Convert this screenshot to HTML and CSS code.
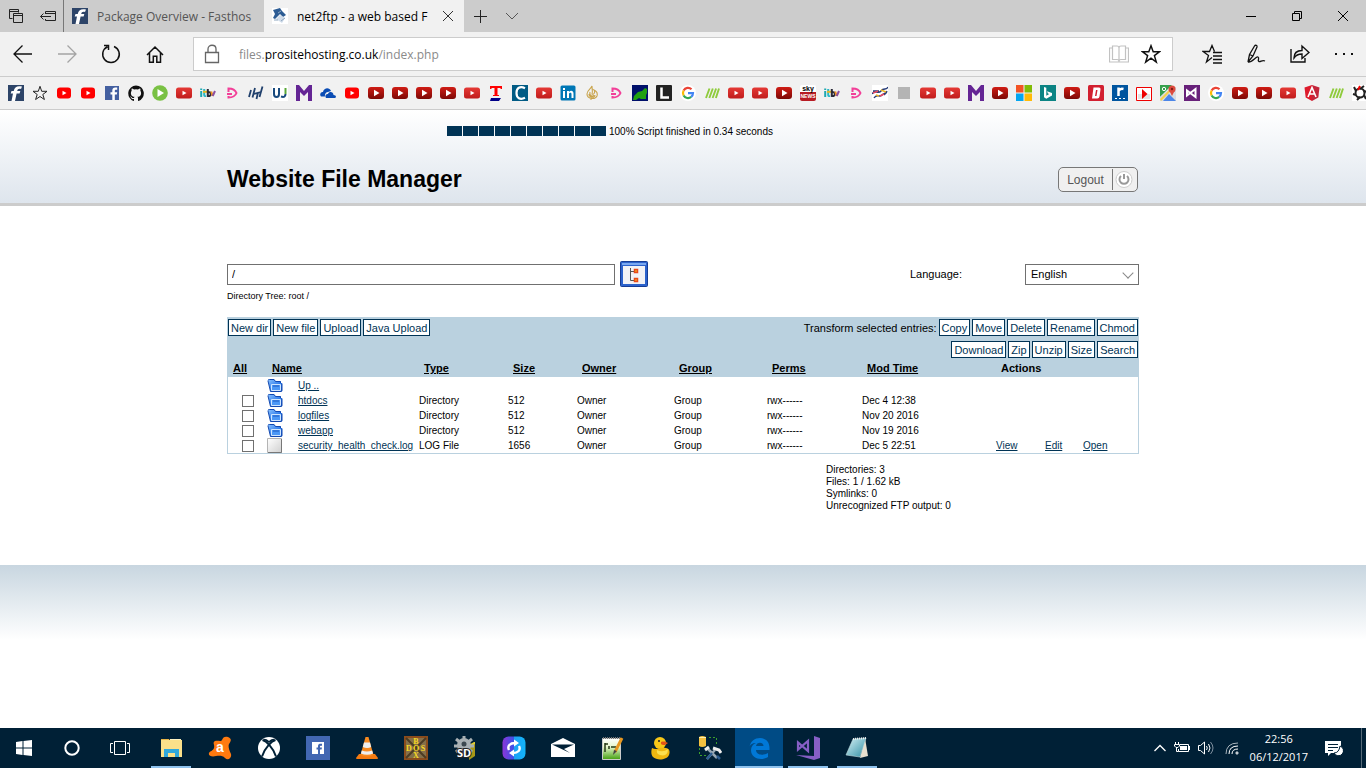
FILE: index.html
```html
<!DOCTYPE html>
<html lang="en">
<head>
<meta charset="utf-8">
<title>net2ftp - a web based FTP client</title>
<link rel="stylesheet" href="styles.css">
</head>
<body>
<svg class="defs" width="0" height="0" aria-hidden="true">
  <defs>
    <linearGradient id="g-dark" x1="0" y1="0" x2="0" y2="1"><stop offset="0" stop-color="#d01c14"/><stop offset="1" stop-color="#7c0906"/></linearGradient>
    <linearGradient id="g-mid" x1="0" y1="0" x2="0" y2="1"><stop offset="0" stop-color="#e53935"/><stop offset="1" stop-color="#c01c1c"/></linearGradient>
    <linearGradient id="g-folder" x1="0" y1="0" x2="1" y2="1"><stop offset="0" stop-color="#8cc4ff"/><stop offset=".6" stop-color="#2f7ceb"/><stop offset="1" stop-color="#0c47b4"/></linearGradient>
    <linearGradient id="g-page" x1="0" y1="0" x2="1" y2="1"><stop offset="0" stop-color="#fff"/><stop offset="1" stop-color="#d0d0d0"/></linearGradient>
    <linearGradient id="g-sync" x1="0" y1="0" x2="1" y2="0"><stop offset="0" stop-color="#8a35d8"/><stop offset=".5" stop-color="#3b53e8"/><stop offset=".5" stop-color="#1fa0f5"/><stop offset="1" stop-color="#12b5fa"/></linearGradient>
    <linearGradient id="g-note" x1="0" y1="0" x2="1" y2="1"><stop offset="0" stop-color="#d8f3f7"/><stop offset="1" stop-color="#2f8ea4"/></linearGradient>
    <linearGradient id="g-npp" x1="0" y1="0" x2="0" y2="1"><stop offset="0" stop-color="#fff"/><stop offset=".4" stop-color="#e6f6cc"/><stop offset="1" stop-color="#43a010"/></linearGradient>
    <symbol id="fast" viewBox="0 0 16 16"><path fill="#2d4468" d="M0 0h16v16H0z"/><path fill="#fff" d="M14 1.500c-5-1-7.500.5-8.300 4.500H3.500L2.700 8.500h2.300L3.500 16H7l1.600-7.500h3l.7-2.500H9.200c.4-2 1.500-2.500 3.800-2z"/></symbol>
    <symbol id="star" viewBox="0 0 16 16"><path fill="none" stroke="#222" d="M8 1.300l1.700 5H15l-4.200 3.200 1.600 5L8 11.500l-4.400 3 1.600-5L1 6.300h5.300z"/></symbol>
    <symbol id="yt" viewBox="0 0 16 16"><rect x="1" y="2.500" width="14" height="11" rx="3" fill="#f00"/><path fill="#fff" d="M6.500 5.700l4 2.300-4 2.300z"/></symbol>
    <symbol id="ytm" viewBox="0 0 16 16"><rect y="2.500" width="16" height="11" rx="2.500" fill="url(#g-mid)"/><path fill="#fff" d="M6.500 5.700l4 2.300-4 2.300z"/></symbol>
    <symbol id="ytd" viewBox="0 0 16 16"><rect y="2" width="16" height="12" rx="3" fill="url(#g-dark)"/><path fill="#fff" d="M6 4.700L11.500 8 6 11.300z"/></symbol>
    <symbol id="fb" viewBox="0 0 16 16"><path fill="#4460a0" d="M1 1h14v14H1z"/><path fill="#fff" d="M8.300 15V9.500H6.500V7.200h1.800V5.500c0-2 1.200-3 3-3h1.900v2.300h-1.300c-.9 0-1.100.4-1.100 1.100v1.300h2.400l-.4 2.300h-2V15z"/></symbol>
    <symbol id="gh" viewBox="0 0 16 16"><path fill="#111" d="M8 .4a8 8 0 0 0-2.500 15.500c.4.100.5-.2.500-.4v-1.500c-2.200.5-2.700-1-2.700-1-.4-.9-.9-1.100-.9-1.100-.7-.5.100-.5.100-.5.800 0 1.200.8 1.200.8.700 1.200 1.900.9 2.300.7.100-.5.300-.9.500-1.100-1.800-.2-3.600-.9-3.600-3.900 0-.9.300-1.600.8-2.100-.1-.3-.4-1.100.1-2.200 0 0 .7-.2 2.200.8a7.600 7.600 0 0 1 4 0c1.500-1 2.200-.8 2.200-.8.400 1.100.2 1.900.1 2.200.5.600.8 1.300.8 2.100 0 3.100-1.900 3.700-3.700 3.900.3.300.6.800.6 1.500v2.200c0 .2.100.5.600.4A8 8 0 0 0 8 .4z"/></symbol>
    <symbol id="gplay" viewBox="0 0 16 16"><circle cx="8" cy="8" r="7.800" fill="#79c143"/><path fill="#fff" d="M5.500 4l6.500 4-6.500 4z"/></symbol>
    <symbol id="itv" viewBox="0 0 16 16" fill="none" stroke-width="2"><path stroke="#20a8b0" d="M1.200 6v6M1.200 3.500v1.500"/><path stroke="#28b8c8" d="M4.200 4v6q0 1.500 1.800 1"/><path stroke="#e8b820" d="M3 6.800h4"/><path stroke="#2a2a38" d="M7.800 4v7q3 .5 3-2t-3-1.500"/><path stroke="#f09020" d="M11.200 6.500l1.500 4.500"/><path stroke="#8c50a0" d="M12.700 11l2.300-5"/></symbol>
    <symbol id="pd" viewBox="0 0 16 16"><path fill="none" stroke="#f23f98" stroke-width="2" d="M4.500 7V3.500C9 3.500 11.500 5.500 12.500 8c-1 2.500-3.500 4.500-8 4.500V11M3 9h5"/></symbol>
    <symbol id="ih" viewBox="0 0 16 16"><path fill="none" stroke="#20406c" stroke-width="1.800" d="M3 5L1 12M7 3L4.500 12.500M10 7.500L8.500 14M14.500 1.500L11.500 12M6 9l7-2"/></symbol>
    <symbol id="uj" viewBox="0 0 16 16"><path fill="#fff" d="M0 0h16v16H0z"/><path fill="none" stroke="#194a7e" stroke-width="2" d="M2 3v6c0 4 5 4 5 0V3M9 11.500c3 1 4.500 0 4.500-2.500"/><path stroke="#5aa838" stroke-width="2" d="M13.500 3v6"/></symbol>
    <symbol id="mm" viewBox="0 0 16 16"><path fill="#642594" d="M0 0h3l5 6 5-6h3v16h-4V7l-4 4-4-4v9H0z"/></symbol>
    <symbol id="od" viewBox="0 0 16 16"><path fill="#0a4cb4" d="M1 11.500c-2-2 0-5 2-4.500C4 2.500 9.500 2 11 6l-3 1c-2 0-3.500 2-3 4.500z"/><path fill="#0a4cb4" d="M6 13c-1.500-2 0-4.500 2-4 1-3 5.500-2.500 5.500 1 3 0 3.200 3 1 3z"/></symbol>
    <symbol id="tt" viewBox="0 0 16 16"><path fill="#f00" d="M2 1h12v3h-1l-1-1H9.500v7H11v1H5v-1h1.500V3H4L3 4H2z"/><path fill="#008" d="M3 13h10l-2 3H2z"/></symbol>
    <symbol id="cc" viewBox="0 0 16 16"><path fill="#015b84" d="M0 0h16v16H0z"/><path fill="none" stroke="#fff" stroke-width="2.200" d="M13 3.200C8 .8 4.500 3 4.500 8s3.500 7.200 8.500 4.800"/></symbol>
    <symbol id="li" viewBox="0 0 16 16"><rect x=".5" y=".5" width="15" height="15" rx="1.500" fill="#0077b5"/><path fill="#fff" d="M3 6h2v7H3zM3 3h2v2H3zM7 6h2v1c1.500-2 4.500-1.500 4.500 1.500V13h-2V9c0-2-2.500-1.500-2.500 0v4H7z"/></symbol>
    <symbol id="aj" viewBox="0 0 16 16"><path fill="none" stroke="#c9a44c" stroke-width="1.100" d="M8 1c-1 3-5 4-5 8 0 5 8 6 10 2 1-3-1-5-3-6 2 3-1 5-2 4 1-2 0-4 0-8zM5 9c0 4 6 4 6 1M6 7c-1 4 3 5 4 3M7 13v2"/></symbol>
    <symbol id="navy" viewBox="0 0 16 16"><path fill="#00106a" d="M0 0h16v16H0z"/><path fill="#20a010" d="M2 11l4-4 4-1 3-3 2 1v4l-1 2v4H9l-2-1-3 2H1z"/></symbol>
    <symbol id="ll" viewBox="0 0 16 16"><rect width="16" height="16" rx="1" fill="#222"/><path fill="none" stroke="#fff" stroke-width="2.500" d="M5.500 2.500v10H13"/></symbol>
    <symbol id="goo" viewBox="0 0 16 16"><circle cx="8" cy="8" r="8" fill="#fff"/><g fill="none" stroke-width="2.200"><path stroke="#ea4335" d="M3.600 5.500A5 5 0 0 1 11.500 4.300"/><path stroke="#fbbc05" d="M3.600 5.500a5.400 5.400 0 0 0 0 5"/><path stroke="#34a853" d="M3.600 10.500a5 5 0 0 0 7.600 1.400"/><path stroke="#4285f4" d="M11.200 11.900c1.300-1 1.800-2.400 1.800-3.800H8"/></g></symbol>
    <symbol id="strp" viewBox="0 0 16 16"><path stroke="#8fcb3c" stroke-width="1.900" d="M2 13L5.500 3.500M5.300 13l3.500-9.500M8.600 13l3.500-9.500M11.900 13l3.100-9.500"/></symbol>
    <symbol id="sky" viewBox="0 0 16 16"><rect width="16" height="16" rx="2" fill="#fff"/><path fill="#b81c24" d="M0 7h16v7q0 2-2 2H2q-2 0-2-2z"/><text x="8" y="6" text-anchor="middle" font-family="Liberation Sans, sans-serif" font-weight="700" font-size="7">sky</text><text x="8" y="13" text-anchor="middle" font-family="Liberation Sans, sans-serif" font-weight="700" font-size="5" fill="#fff">NEWS</text></symbol>
    <symbol id="oly" viewBox="0 0 16 16"><path fill="#fff" d="M0 0h16v16H0z"/><path fill="none" stroke="#263c78" stroke-width="1.400" d="M0 9c3-5 6 1 9-3s5 0 7-4M2 13c3-5 5 0 8-3s4-1 5-4M1 6h6M12 10l3-3"/><path stroke="#e84860" stroke-width="1.400" d="M1 8l5-2M8 11l4-2"/><path stroke="#e8b020" stroke-width="1.400" d="M9 5l5 2M4 10l3 1"/></symbol>
    <symbol id="gry" viewBox="0 0 16 16"><path fill="#b4b4b4" d="M2 2h12v12H2z"/></symbol>
    <symbol id="ms" viewBox="0 0 16 16"><path fill="#f35325" d="M0 0h7.500v7.500H0z"/><path fill="#81bc06" d="M8.500 0H16v7.500H8.500z"/><path fill="#05a6f0" d="M0 8.500h7.500V16H0z"/><path fill="#ffba08" d="M8.500 8.500H16V16H8.500z"/></symbol>
    <symbol id="bing" viewBox="0 0 16 16"><path fill="#0c8484" d="M0 0h16v16H0z"/><path fill="#fff" d="M4 2l2.300.8v8l3-1.700-1.400-.7-.9-2.200 5 1.800v2.400l-5.700 3.300L4 12.200z"/></symbol>
    <symbol id="rd" viewBox="0 0 16 16"><rect width="16" height="16" rx="1.500" fill="#d22030"/><path fill="#fff" fill-rule="evenodd" d="M5.500 2.500H11q1.800 0 1.500 2l-1 7q-.3 2-2.200 2H4zM8 5l-1 6h1.500l1-6z"/></symbol>
    <symbol id="rr" viewBox="0 0 16 16"><path fill="#00559f" d="M0 0h16v16H0z"/><path fill="none" stroke="#fff" stroke-width="2.500" d="M6.500 11V2.500M6.500 6c1-2 3-2.500 5-2"/><path fill="#fff" d="M3 13h2v1H3zM7 13h2v1H7zM11 13h2v1h-2z"/></symbol>
    <symbol id="rbox" viewBox="0 0 16 16"><path fill="#fff" stroke="#e00" d="M.5 2.500h15v13H.5z"/><path fill="#e4e4e4" d="M2 9h12v5H2z"/><path fill="#e00" d="M6 4l5.500 5L6 14z"/></symbol>
    <symbol id="maps" viewBox="0 0 16 16"><path fill="#36a04c" d="M0 0h12L0 12z"/><path fill="#d9dce0" d="M0 16V12L12 2h4v14z"/><path fill="#f5cf4a" d="M0 14L13 1l2 1L1 16z"/><path fill="#4c86e8" d="M3 16l6-7 7 7z"/><circle cx="12" cy="4" r="3.500" fill="#dd4b3e"/><path fill="#dd4b3e" d="M9 5h6l-3 6z"/><circle cx="12" cy="4" r="1.200" fill="#801c14"/><circle cx="4" cy="4" r="1.700" fill="none" stroke="#fff"/></symbol>
    <symbol id="vs" viewBox="0 0 16 16"><path fill="#68217a" d="M0 0h16v16H0z"/><path fill="none" stroke="#fff" stroke-width="2" d="M3 5.500v5l8.500-6.500v8z"/></symbol>
    <symbol id="ang" viewBox="0 0 16 16"><path fill="#c3253a" d="M8 0v16l6.300-3.600 1.200-9.800z"/><path fill="#dd1b2c" d="M8 0L.5 2.600l1.200 9.800L8 16z"/><path fill="none" stroke="#fff" stroke-width="1.600" d="M4 12l4-9.500 4 9.500M5.500 9h5"/></symbol>
    <symbol id="aper" viewBox="0 0 16 16"><path fill="#fff" d="M0 0h16v16H0z"/><circle cx="8" cy="8" r="4.500" fill="none" stroke="#222" stroke-width="2"/><path stroke="#222" stroke-width="2" d="M8 4l4-3M11.500 6l4 1M12 10l2 4M8 12l-3 3M4 10l-3-1M4 6L2 2"/><path stroke="#e00" stroke-width="2" d="M6 5l2-4"/></symbol>
    <symbol id="folder" viewBox="0 0 16 15"><path fill="url(#g-folder)" d="M1 2.500Q1 1 2.500 1H7l1.500 2H13q1 0 1 1v1h1v7.500q0 1-1 1H3.500z"/><path fill="none" stroke="#1248b0" d="M1 2.500Q1 1.500 2.500 1.500H7l1.500 2h5v1.500M15 5.500v7q0 1-1 1H3.500L1 3"/><path fill="#4c98f6" stroke="#cfe6ff" d="M4.500 6.500h9v6h-9z"/><path stroke="#1c58c0" d="M6 8h6"/></symbol>
    <symbol id="file" viewBox="0 0 16 15"><path fill="url(#g-page)" stroke="#b4b4b4" d="M.5.500h14v14H.5z"/><path fill="none" stroke="#777" d="M14.500 1v13.500H1"/></symbol>
  </defs>
</svg>

<header class="browser">
  <div class="tabstrip">
    <div class="tabtools">
      <button aria-label="Tabs you have set aside"><svg width="16" height="16" viewBox="0 0 16 16" fill="none" stroke="#222"><path d="M4.500 10.500h-3v-9h9v3M1.500 3.500h9M5.500 5.500h9v9h-9zM5.500 7.500h9"/></svg></button>
      <button aria-label="Set tabs aside"><svg width="16" height="16" viewBox="0 0 16 16" fill="none" stroke="#222"><path d="M5.500 6V3.500h10v9h-10V11M5.500 5.500h10M.5 8.500H11M3.500 5.500l-3 3 3 3"/></svg></button>
    </div>
    <a class="tab" href="#"><svg class="i16"><use href="#fast"/></svg><span>Package Overview - Fasthos</span></a>
    <div class="tab tab-active"><svg class="i16" viewBox="0 0 16 16"><path fill="#fff" d="M0 0h16v16H0z"/><path fill="#2c5c94" d="M1 2l7-2 2 3 4 4-3 2-3-3-5 5-2-1 2-4z"/><path fill="#d0dcea" d="M4 11l4-4 5 3-3 5z"/><path stroke="#90a8c0" d="M2 12h4M6 5l3-2M9 13l4-3"/></svg><span>net2ftp - a web based F</span><button class="closetab" aria-label="Close tab"><svg width="12" height="12" viewBox="0 0 12 12" stroke="#333"><path d="M1 1l10 10M11 1L1 11"/></svg></button></div>
    <button class="striptool" aria-label="New tab"><svg width="14" height="14" viewBox="0 0 14 14" stroke="#222"><path d="M7.500 1v13M1 7.500h13"/></svg></button>
    <button class="striptool" aria-label="Tab previews"><svg width="14" height="14" viewBox="0 0 14 14" fill="none" stroke="#555"><path d="M1 4l6 6 6-6"/></svg></button>
    <div class="winbuttons">
      <button aria-label="Minimize"><svg width="10" height="10" stroke="#000"><path d="M0 5.500h10"/></svg></button>
      <button aria-label="Restore"><svg width="10" height="10" fill="none" stroke="#000"><path d="M.5 2.500h7v7h-7zM2.500 2.500v-2h7v7h-2"/></svg></button>
      <button aria-label="Close"><svg width="10" height="10" stroke="#000"><path d="M0 0l10 10M10 0L0 10"/></svg></button>
    </div>
  </div>
  <div class="toolbar">
    <nav class="navbuttons">
      <button aria-label="Back"><svg width="20" height="20" viewBox="0 0 20 20" fill="none" stroke="#111" stroke-width="1.300"><path d="M1 10h18M9.500 1.500L1 10l8.500 8.500"/></svg></button>
      <button aria-label="Forward"><svg width="20" height="20" viewBox="0 0 20 20" fill="none" stroke="#a4a4a4" stroke-width="1.300"><path d="M1 10h18M10.500 1.500L19 10l-8.500 8.500"/></svg></button>
      <button aria-label="Refresh"><svg width="20" height="20" viewBox="0 0 20 20" fill="none" stroke="#111" stroke-width="1.500"><path d="M13 2.500a8.300 8.300 0 1 1-6.500.2M3 1.500h4.500V6"/></svg></button>
      <button aria-label="Home"><svg width="20" height="20" viewBox="0 0 20 20" fill="none" stroke="#111" stroke-width="1.500"><path d="M2 11l8-8 8 8M4.500 9v9.200h3.800v-6h3.500v6h3.700V9"/></svg></button>
    </nav>
    <div class="address">
      <svg width="16" height="20" viewBox="0 0 16 20" fill="none" stroke="#666" stroke-width="1.300"><path d="M1.500 8.500h13v10h-13zM4 8.500V5c0-5 8-5 8 0v3.500"/></svg>
      <p class="url">files.<b>prositehosting.co.uk</b>/index.php</p>
      <button aria-label="Reading view"><svg width="20" height="20" viewBox="0 0 20 20" fill="none" stroke="#c2c2c2" stroke-width="1.200"><path d="M10 3.500v14M3.500 2H8q2 0 2 2 0-2 2-2h4.500v13.500H12q-2 0-2 2 0-2-2-2H3.500zM3.500 4h-3v14h19V4h-3"/></svg></button>
      <button aria-label="Add to favourites"><svg width="20" height="20" viewBox="0 0 20 20" fill="none" stroke="#111" stroke-width="1.500"><path d="M10 1.800l2.200 6h6.200l-5 3.800 1.900 6.400-5.300-3.800L4.700 18l1.900-6.400-5-3.800h6.200z"/></svg></button>
    </div>
    <div class="toolbuttons">
      <button aria-label="Hub"><svg width="20" height="20" viewBox="0 0 20 20" fill="none" stroke="#111" stroke-width="1.300"><path d="M10 13.500L4.500 18l2-6.500-5.500-4h6.500l2.500-6 2.500 6M11 8.500h9M11 12h9M11 15.500h9M11 19h9"/></svg></button>
      <button aria-label="Make a web note"><svg width="20" height="20" viewBox="0 0 20 20" fill="none" stroke="#111" stroke-width="1.300"><path d="M2 18L3.500 10.500 8.500 2c1-1.500 3-.5 2.500 1L7 12l-5 6zM3.500 10.500L7 12M2 18c4 1 8-6 10-5s-1 4 1 4.500 3-2 6-.5"/></svg></button>
      <button aria-label="Share"><svg width="20" height="20" viewBox="0 0 20 20" fill="none" stroke="#111" stroke-width="1.400"><path d="M1 5v13h14v-4M4 14c0-5 3-7.500 8-7.500V2l7 6.500-7 6v-4.500c-4 0-6 1-8 4z"/></svg></button>
      <button aria-label="More"><svg width="20" height="20" viewBox="0 0 20 20" fill="#111"><path d="M1 9h2v2H1zM9 9h2v2H9zM17 9h2v2h-2z"/></svg></button>
    </div>
  </div>
  <nav class="favourites" aria-label="Favourites">
    <svg><use href="#fast"/></svg><svg><use href="#star"/></svg><svg><use href="#yt"/></svg><svg><use href="#yt"/></svg><svg><use href="#fb"/></svg><svg><use href="#gh"/></svg><svg><use href="#gplay"/></svg><svg><use href="#ytm"/></svg><svg><use href="#itv"/></svg><svg><use href="#pd"/></svg>
    <svg><use href="#ih"/></svg><svg><use href="#uj"/></svg><svg><use href="#mm"/></svg><svg><use href="#od"/></svg><svg><use href="#yt"/></svg><svg><use href="#ytd"/></svg><svg><use href="#ytd"/></svg><svg><use href="#ytd"/></svg><svg><use href="#ytd"/></svg><svg><use href="#ytm"/></svg>
    <svg><use href="#tt"/></svg><svg><use href="#cc"/></svg><svg><use href="#ytm"/></svg><svg><use href="#li"/></svg><svg><use href="#aj"/></svg><svg><use href="#pd"/></svg><svg><use href="#navy"/></svg><svg><use href="#ll"/></svg><svg><use href="#goo"/></svg><svg><use href="#strp"/></svg>
    <svg><use href="#ytm"/></svg><svg><use href="#ytm"/></svg><svg><use href="#ytd"/></svg><svg><use href="#sky"/></svg><svg><use href="#itv"/></svg><svg><use href="#pd"/></svg><svg><use href="#oly"/></svg><svg><use href="#gry"/></svg><svg><use href="#ytm"/></svg><svg><use href="#ytm"/></svg>
    <svg><use href="#mm"/></svg><svg><use href="#ytd"/></svg><svg><use href="#ms"/></svg><svg><use href="#bing"/></svg><svg><use href="#ytd"/></svg><svg><use href="#rd"/></svg><svg><use href="#rr"/></svg><svg><use href="#rbox"/></svg><svg><use href="#maps"/></svg><svg><use href="#vs"/></svg>
    <svg><use href="#goo"/></svg><svg><use href="#ytd"/></svg><svg><use href="#ytd"/></svg><svg><use href="#ytm"/></svg><svg><use href="#ang"/></svg><svg><use href="#strp"/></svg><svg><use href="#aper"/></svg>
  </nav>
</header>

<main class="page">
  <div class="banner">
    <div class="wrap">
      <div class="progress">
        <div class="blocks"><i></i><i></i><i></i><i></i><i></i><i></i><i></i><i></i><i></i><i></i></div>
        <span>100% Script finished in 0.34 seconds</span>
      </div>
      <div class="titlebar">
        <h1>Website File Manager</h1>
        <button class="logout"><span>Logout</span><svg width="25" height="23" viewBox="0 0 25 23" fill="none"><path stroke="#777" d="M.5 1v21"/><circle cx="12" cy="11.500" r="8" fill="#fff" stroke="#ccc"/><path stroke="#999" stroke-width="2" d="M9 8a4.500 4.500 0 1 0 6 0M12 6v5"/></svg></button>
      </div>
    </div>
  </div>
  <form class="wrap manager">
    <div class="pathrow">
      <input class="path" type="text" value="/" aria-label="Directory">
      <button class="tree" type="button" aria-label="Directory tree"><svg width="28" height="26" viewBox="0 0 28 26"><rect x=".5" y=".5" width="27" height="25" rx="1" fill="#2c62cc" stroke="#163c94"/><path fill="#7aa8f0" d="M2 2h24v2H2z"/><path fill="#f2f2f6" d="M3 5h22v18H3z"/><path fill="none" stroke="#555" d="M10.500 7v12.500H15M10.500 10.500H15"/><path fill="#f8b020" stroke="#e84818" stroke-width="1.500" d="M14.500 8.500h3v3h-3zM14.500 17.500h3v3h-3z"/></svg></button>
      <label class="langlabel" for="lang">Language:</label>
      <div class="langbox"><select id="lang"><option>English</option></select></div>
    </div>
    <p class="treeline">Directory Tree: root /</p>

    <section class="listing">
      <div class="actions">
        <div class="group"><button type="button">New dir</button><button type="button">New file</button><button type="button">Upload</button><button type="button">Java Upload</button></div>
        <div class="group right"><span>Transform selected entries:</span><button type="button">Copy</button><button type="button">Move</button><button type="button">Delete</button><button type="button">Rename</button><button type="button">Chmod</button></div>
        <div class="group right second"><button type="button">Download</button><button type="button">Zip</button><button type="button">Unzip</button><button type="button">Size</button><button type="button">Search</button></div>
      </div>
      <table>
        <colgroup><col class="c-all"><col class="c-icon"><col class="c-name"><col class="c-type"><col class="c-size"><col class="c-owner"><col class="c-group"><col class="c-perms"><col class="c-mod"><col class="c-view"><col class="c-edit"><col></colgroup>
        <thead><tr><th><a href="#">All</a></th><th colspan="2"><a href="#">Name</a></th><th><a href="#">Type</a></th><th><a href="#">Size</a></th><th><a href="#">Owner</a></th><th><a href="#">Group</a></th><th><a href="#">Perms</a></th><th><a href="#">Mod Time</a></th><th colspan="3">Actions</th></tr></thead>
        <tbody>
          <tr class="up"><td></td><td><svg class="fi"><use href="#folder"/></svg></td><td><a href="#">Up ..</a></td><td colspan="9"></td></tr>
          <tr><td><input type="checkbox" aria-label="Select htdocs"></td><td><svg class="fi"><use href="#folder"/></svg></td><td><a href="#">htdocs</a></td><td>Directory</td><td>512</td><td>Owner</td><td>Group</td><td>rwx------</td><td>Dec 4 12:38</td><td colspan="3"></td></tr>
          <tr><td><input type="checkbox" aria-label="Select logfiles"></td><td><svg class="fi"><use href="#folder"/></svg></td><td><a href="#">logfiles</a></td><td>Directory</td><td>512</td><td>Owner</td><td>Group</td><td>rwx------</td><td>Nov 20 2016</td><td colspan="3"></td></tr>
          <tr><td><input type="checkbox" aria-label="Select webapp"></td><td><svg class="fi"><use href="#folder"/></svg></td><td><a href="#">webapp</a></td><td>Directory</td><td>512</td><td>Owner</td><td>Group</td><td>rwx------</td><td>Nov 19 2016</td><td colspan="3"></td></tr>
          <tr><td><input type="checkbox" aria-label="Select security_health_check.log"></td><td><svg class="fi"><use href="#file"/></svg></td><td><a href="#">security_health_check.log</a></td><td>LOG File</td><td>1656</td><td>Owner</td><td>Group</td><td>rwx------</td><td>Dec 5 22:51</td><td><a href="#">View</a></td><td><a href="#">Edit</a></td><td><a href="#">Open</a></td></tr>
        </tbody>
      </table>
    </section>
    <ul class="stats"><li>Directories: 3</li><li>Files: 1 / 1.62 kB</li><li>Symlinks: 0</li><li>Unrecognized FTP output: 0</li></ul>
  </form>
  <div class="pagefoot"></div>
</main>

<footer class="taskbar">
  <div class="system">
    <button aria-label="Start"><svg width="16" height="16" viewBox="0 0 16 16" fill="#fff"><path d="M0 2l6.500-1v6.500H0zM7.500.9L16 0v7.500H7.500zM0 8.500h6.500V15L0 14zM7.500 8.500H16V16l-8.500-1.100z"/></svg></button>
    <button aria-label="Cortana"><svg width="16" height="16" viewBox="0 0 16 16" fill="none" stroke="#fff" stroke-width="2"><circle cx="8" cy="8" r="6.700"/></svg></button>
    <button aria-label="Task view"><svg width="20" height="16" viewBox="0 0 20 16" fill="none" stroke="#fff"><path d="M4.500 1.500h11v13h-11zM3 3.500H.5v9H3M17 3.500h2.500v9H17"/></svg></button>
  </div>
  <div class="apps">
    <button class="open" aria-label="File Explorer"><svg viewBox="0 0 24 24"><path fill="#e8b548" d="M2 3h8l1 2H2z"/><path fill="#fbe08a" d="M2 4h21v17H2z"/><path fill="#fff3c0" d="M11 3h11v1H11z"/><path fill="#30a8dc" d="M5 21v-8h15v8h-4v-4H9v4z"/></svg></button>
    <button aria-label="Avast"><svg viewBox="0 0 24 24"><path fill="#ff7a10" d="M14 4c1-3 3-4 6-3 5 2 2 5 1 7s0 6 2 10c1 4-3 7-6 4-3-3-6-2-9-2-4 1-8 0-7-3 1-2 4-2 5-5 1-4-2-5 1-7 3-1 6 1 7-1z"/><text x="12" y="16" text-anchor="middle" font-family="Liberation Sans, sans-serif" font-weight="700" font-size="14" fill="#fff">a</text></svg></button>
    <button aria-label="Xbox"><svg viewBox="0 0 24 24"><circle cx="12" cy="12" r="11" fill="#fff"/><path fill="none" stroke="#002036" stroke-width="2" d="M5.500 4C9 5 16 11 19 20.500M18.500 4C15 5 8 11 5 20.500"/><path fill="#002036" d="M6 3c2-.5 4 .5 6 2 2-1.500 4-2.500 6-2l-2 1.500-4 2.500-4-2.500z"/></svg></button>
    <button aria-label="Facebook"><svg viewBox="0 0 24 24"><path fill="#4267b2" d="M0 0h24v24H0z"/><path fill="#fff" d="M6 6h12v12H6z"/><path fill="#4267b2" d="M12 18v-4.500h-1.500v-2H12v-1.500c0-2 1.500-2.500 4-2.200v2c-1.700-.1-2 0-2 .7v1h2l-.4 2H14V18z"/></svg></button>
    <button aria-label="VLC"><svg viewBox="0 0 24 24"><path fill="#f47a10" d="M4 18h16l3 4q0 1-1 1H2q-1 0-1-1z"/><path fill="#f88a20" d="M10.500 1h3l5 18q-6 3-13 0z"/><path fill="#eee" d="M9 6.500h6l1.200 4.500q-4 2-8.400 0zM6.800 14.500q5 2 10.300 0l1 3q-6 2.500-12.200 0z"/></svg></button>
    <button aria-label="DOSBox"><svg viewBox="0 0 24 24"><path fill="#84704a" stroke="#8a4c1c" stroke-width="2" d="M1 1h22v22H1z"/><path stroke="#4c3c24" stroke-width="2" d="M2 2l20 20M22 2L2 22"/><g font-family="Liberation Serif, serif" font-size="8" font-weight="700" fill="#f8d820" text-anchor="middle"><text x="12" y="8">B</text><text x="5" y="15">D</text><text x="12" y="15">O</text><text x="19" y="15">S</text><text x="12" y="22">X</text></g></svg></button>
    <button aria-label="SD tool"><svg viewBox="0 0 24 24"><path fill="#a89818" d="M16 9l6-3v14l-6 4z"/><path fill="#e0cc30" d="M16 9l5-3h1v2l-6 3z"/><path stroke="#a8b0b4" stroke-width="3" d="M3 3l16 13M11 0v18M19 3L3 16M1 10h20"/><circle cx="11" cy="9" r="7" fill="#a8b0b4"/><circle cx="11" cy="8" r="2.500" fill="#3c4850"/><text x="11" y="21" text-anchor="middle" font-family="Open Sans, sans-serif" font-weight="700" font-size="11" fill="#fff" stroke="#222" stroke-width="2" paint-order="stroke">SD</text></svg></button>
    <button aria-label="Sync"><svg viewBox="0 0 24 24"><rect x=".5" y=".5" width="23" height="23" rx="6" fill="url(#g-sync)"/><g fill="none" stroke="#fff" stroke-width="2.400"><path d="M7 14c-2-4 1-7 6-7M17 10c2 4-1 7-6 7"/></g><path fill="#fff" d="M12 3.500l5 3.500-5 3.500zM12 13.500L7 17l5 3.500z"/></svg></button>
    <button aria-label="Mail"><svg viewBox="0 0 24 24"><path fill="#fff" d="M0 8l12-6 12 6v13H0z"/><path fill="#002036" d="M1 8.500h22L13 13l6 4z"/></svg></button>
    <button aria-label="Notepad++"><svg viewBox="0 0 24 24"><path fill="url(#g-npp)" stroke="#ccc" d="M2.500 2.500h18v21h-18z"/><path stroke="#777" stroke-dasharray="1 1" stroke-width="2" d="M3 2h17"/><path fill="none" stroke="#243814" stroke-width="1.500" d="M5 7v9M5 8h3M9 10v3M11 11h5"/><path stroke="#e89820" stroke-width="3" d="M22 2l-7 14"/><path fill="#444" d="M14 14l3 1-4 4z"/></svg></button>
    <button aria-label="Cyberduck"><svg viewBox="0 0 24 24"><circle cx="11" cy="7" r="6" fill="#f8c818"/><path fill="#f0b810" d="M3 12q4 2 7 0c9-1 12 1 10 7-2 5-12 6-16 2-2-2-2-6-1-9z"/><path fill="#fbe050" d="M8 14q6 3 11-1 0 8-8 6-4-1-3-5z"/><path fill="#e45418" d="M12 6c3-1 5 0 7 1-2 2-5 3-7 1z"/><circle cx="10" cy="5" r="1" fill="#222"/></svg></button>
    <button aria-label="Build tools"><svg viewBox="0 0 24 24"><path fill="#f4c040" d="M1 1q3-2 7 0v9q-4 2-7 0z"/><path fill="#fff0b0" d="M1 1h7v1H1z"/><path fill="none" stroke="#3ca02c" stroke-dasharray="2 2" d="M11 1.500h7.500V9M1.500 12v7.500H10"/><path stroke="#98a8b4" stroke-width="2.500" d="M9 12l10 10M17 14l-8 9"/><path stroke="#eee" stroke-width="3" d="M15 12l6 2 2 3M7 14l4-3"/><path stroke="#2c5c90" stroke-width="2.500" d="M14 17l-5 6M19 20l3 3"/></svg></button>
    <button class="open current" aria-label="Edge"><svg viewBox="0 0 24 24"><path fill="#0078d7" d="M2.500 11C3.500 5 8 2 13 2c6 0 9.500 4 9.500 10v2H9c0 5 7 6 12 3v4c-6 4-17 2-17-7 0-3 2-6 5-7-4 0-6 2-6.500 4zM9 10h7.500c0-4.500-7-4.500-7.500 0z"/></svg></button>
    <button class="open" aria-label="Visual Studio"><svg viewBox="0 0 24 24"><path fill="#865fc5" d="M18 0l6 2v20l-6 2L0 19l18 1z"/><path fill="none" stroke="#865fc5" stroke-width="2.200" d="M2 6.500v7L12 5v10z"/></svg></button>
    <button class="open" aria-label="Notepad"><svg viewBox="0 0 24 24"><path fill="#e8e0d0" d="M20 2l3 18-8 2z"/><path fill="url(#g-note)" stroke="#bcd8dc" stroke-width=".6" d="M8 3l13-1-6 19-14-2z"/><path stroke="#eee" stroke-dasharray="1 1" stroke-width="2" d="M8 3l13-1"/></svg></button>
  </div>
  <div class="tray">
    <button aria-label="Show hidden icons"><svg width="12" height="8" viewBox="0 0 12 8" fill="none" stroke="#fff" stroke-width="1.300"><path d="M.5 7L6 1.500 11.500 7"/></svg></button>
    <button aria-label="Battery"><svg width="16" height="12" viewBox="0 0 16 12" fill="none" stroke="#fff"><path d="M6 2.500h8.500v7H4.500V7M15.500 4v4M2.500 5v4.500h2M1.500 0v2M4.500 0v2M.5 2.500h5V4L4 5.500H2L.5 4z"/><path fill="#fff" stroke="none" d="M6 4h7v4H6z"/></svg></button>
    <button aria-label="Volume"><svg width="16" height="14" viewBox="0 0 16 14" fill="none" stroke="#fff"><path d="M.5 4.500h2L6.500 1v12L2.500 9.500h-2zM8.500 5q1.500 2 0 4M10.500 3q3 4 0 8"/><path stroke="#8090a0" d="M12.500 1q5 6 0 12"/></svg></button>
    <button class="network" aria-label="Network"><svg width="14" height="14" viewBox="0 0 14 14" fill="none" stroke="#a8b4bc"><path d="M1 13Q1 2 13 2"/><path stroke="#fff" d="M4 13Q4 5 13 5M7 13q0-5 6-5"/><circle cx="12" cy="12" r="1.200" fill="#fff"/></svg></button>
    <time class="clock" datetime="2017-12-06T22:56"><span>22:56</span><span>06/12/2017</span></time>
    <button class="notify" aria-label="Notifications"><svg width="18" height="17" viewBox="0 0 18 17"><path fill="#fff" d="M0 1h16v12H6l-3 3v-3H0z"/><path stroke="#002036" d="M3 4.500h10M3 7.500h10M3 10.500h5"/><path fill="#fff" stroke="#002036" d="M15 6a5 5 0 1 1-6 7q5 0 6-7z"/></svg></button>
    <span class="peek"></span>
  </div>
</footer>
</body>
</html>
```
FILE: styles.css
```css
* { box-sizing: border-box; }
body { margin: 0; min-height: 100vh; display: flex; flex-direction: column; overflow: hidden; background: #fff; color: #000; font-family: "Liberation Sans", Arial, sans-serif; font-size: 10px; }
button { margin: 0; padding: 0; border: 0; background: none; font: inherit; color: inherit; display: flex; align-items: center; justify-content: center; }
svg { display: block; flex: none; }
.defs { position: absolute; }
p, h1, ul { margin: 0; padding: 0; }
.i16 { width: 16px; height: 16px; }

.browser { background: #f1f1f1; font-family: "Open Sans", "Segoe UI", sans-serif; }
.tabstrip { display: flex; height: 32px; background: #ccc; }
.tabtools { display: flex; gap: 16px; padding: 0 7px 0 8px; border-right: 1px solid #777; }
.tab { display: flex; align-items: center; gap: 9px; width: 200px; padding: 0 8px; font-size: 12px; color: #555; text-decoration: none; white-space: nowrap; overflow: hidden; }
.tab-active { background: #f1f1f1; color: #000; }
.closetab { margin-left: auto; padding-right: 2px; }
.striptool { width: 32px; }
.winbuttons { display: flex; margin-left: auto; }
.winbuttons button { width: 46px; }
.toolbar { display: flex; align-items: center; height: 44px; }
.navbuttons { display: flex; gap: 24px; padding: 0 28px 0 13px; }
.address { flex: 1; display: flex; align-items: center; height: 34px; padding: 0 11px 0 10px; border: 1px solid #ccc; background: #fff; }
.url { flex: 1; padding-left: 19px; font-size: 12px; color: #8a8a8a; }
.url b { font-weight: 400; color: #000; }
.address button + button { margin-left: 12px; }
.toolbuttons { display: flex; gap: 24px; padding: 0 12px 0 29px; }
.favourites { display: flex; align-items: center; gap: 8px; height: 34px; padding: 0 8px; border: solid #ccc; border-width: 1px 0; overflow: hidden; }
.favourites svg { width: 16px; height: 16px; }

.page { flex: 1; display: flex; flex-direction: column; }
.wrap { width: 100%; max-width: 912px; margin: 0 auto; }
.banner { padding: 15px 0 11px; border-bottom: 3px solid #ccc; background: linear-gradient(#fff, #dee5ed); }
.progress { display: flex; align-items: center; gap: 3px; height: 12px; padding-left: 220px; }
.blocks { display: flex; gap: 1px; }
.blocks i { width: 15px; height: 10px; background: #003355; }
.titlebar { display: flex; align-items: center; justify-content: space-between; margin-top: 30px; padding-right: 1px; }
h1 { font-size: 23px; line-height: 25px; }
.logout { width: 80px; height: 25px; border: 1px solid #777; border-radius: 5px; background: #f0f0f0; color: #555; font-size: 12px; justify-content: flex-end; }
.logout span { flex: 1; text-align: center; }

.manager { padding-top: 55px; }
.pathrow { display: flex; align-items: center; height: 26px; font-size: 11px; }
.path { width: 388px; height: 21px; margin-right: 5px; padding: 0 4px; border: 1px solid #707070; font: inherit; }
.langlabel { margin-left: auto; margin-right: 63px; }
.langbox { position: relative; width: 114px; }
.langbox select { display: block; width: 100%; height: 21px; padding: 0 5px; border: 1px solid #707070; border-radius: 0; background: #fff; font: inherit; appearance: none; }
.langbox::after { content: ""; position: absolute; right: 7px; top: 5px; width: 7px; height: 7px; border: solid #888; border-width: 0 1px 1px 0; transform: rotate(45deg); pointer-events: none; }
.treeline { margin-top: 3px; font-size: 9px; line-height: 12px; }

.listing { margin-top: 15px; border: 1px solid #bad1df; }
.actions { display: flex; flex-wrap: wrap; justify-content: space-between; row-gap: 5px; padding: 1px 0 2px; background: #bad1df; font-size: 11px; }
.group { display: flex; align-items: center; gap: 2px; }
.second { width: 100%; justify-content: flex-end; }
.group button { height: 17px; padding: 0 2px; border: 1px solid #003355; background: #fff; color: #003355; }
table { width: 100%; table-layout: fixed; border-collapse: collapse; line-height: 15px; }
th { height: 17px; padding: 0 0 0 5px; background: #bad1df; text-align: left; font-size: 11px; line-height: 17px; }
th a { color: #000; }
td { height: 15px; padding: 0; white-space: nowrap; }
td a { color: #003355; }
.up td { height: 16px; }
.c-all { width: 39px; } .c-icon { width: 31px; } .c-name { width: 121px; } .c-type { width: 89px; } .c-size { width: 69px; } .c-owner { width: 97px; } .c-group { width: 93px; } .c-perms { width: 95px; } .c-mod { width: 134px; } .c-view { width: 49px; } .c-edit { width: 38px; }
td input { display: block; width: 12px; height: 12px; margin: 0 0 0 14px; border: 1px solid #707070; background: #fff; appearance: none; }
.fi { width: 16px; height: 15px; }
.stats { width: 313px; margin: 10px 0 0 auto; list-style: none; line-height: 12px; }
.pagefoot { flex: 1; margin-top: 53px; background: linear-gradient(#c8d6e0, #fff 75px); }

.taskbar { display: flex; justify-content: space-between; height: 40px; background: #002036; color: #fff; }
.system, .apps, .tray { display: flex; }
.system button { width: 48px; }
.apps { flex: 1; gap: 1px; padding-left: 3px; }
.apps button { width: 48px; position: relative; }
.apps svg { width: 24px; height: 24px; }
.apps .open::after { content: ""; position: absolute; left: 4px; right: 4px; bottom: 0; height: 2px; background: #8ec2ee; }
.apps .current { background: #004b85; }
.apps .current::after { left: 0; right: 0; }
.tray { align-items: center; gap: 8px; }
.network { margin-left: 3px; }
.clock { display: flex; flex-direction: column; align-items: center; font-family: "Open Sans", "Segoe UI", sans-serif; font-size: 11px; line-height: 18px; margin-left: 3px; }
.notify { margin-left: 9px; }
.peek { height: 40px; margin: 0 4px 0 10px; border-left: 1px solid #566a78; }
```
